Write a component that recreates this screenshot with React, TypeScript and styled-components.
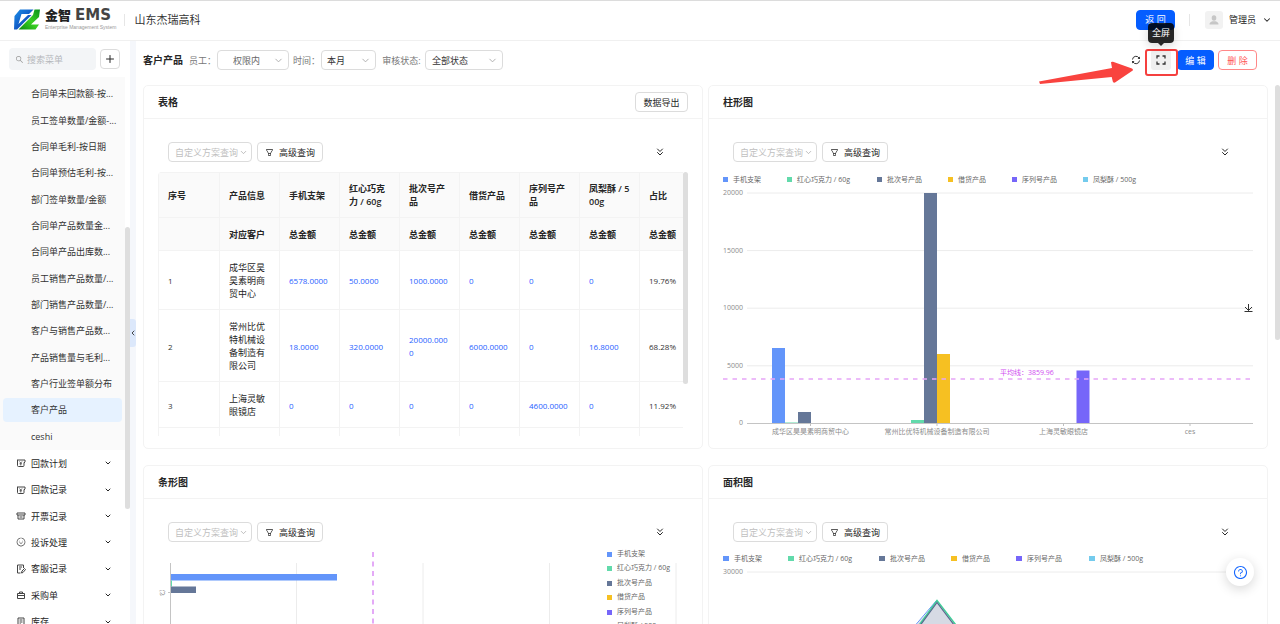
import React from "react";
import styled, { createGlobalStyle, css } from "styled-components";
import {
  AiOutlineFilter,
  AiOutlineSearch,
  AiOutlineSmile,
  AiOutlineQuestionCircle,
} from "react-icons/ai";
import { ChevronDown, ChevronLeft, ChevronsDown, Plus } from "lucide-react";

const FONT = '"Open Sans", "Noto Sans CJK SC", sans-serif';

const GlobalStyle = createGlobalStyle`
  *, *::before, *::after { box-sizing: border-box; }
  body {
    margin: 0;
    font-family: ${FONT};
    font-size: 9px;
    line-height: 13px;
    color: #262626;
    background: #fff;
  }
  button, select, input { font: inherit; color: inherit; }
  svg { display: block; flex: none; }
`;

const Page = styled.div`
  display: flex;
  flex-direction: column;
  height: 100vh;
  overflow: hidden;
`;

/* ---------- top bar ---------- */

const TopBar = styled.header`
  display: flex;
  align-items: center;
  flex: none;
  height: 41px;
  padding: 0 8px 2px 13px;
  border-top: 1px solid #dcdcdc;
  border-bottom: 1px solid #f0f0f0;
`;

const Brand = styled.div`
  display: flex;
  align-items: center;
  gap: 5px;
`;

const BrandText = styled.div`
  display: flex;
  flex-direction: column;
`;

const BrandName = styled.div`
  display: flex;
  align-items: center;
  gap: 4px;
  height: 14px;
  font-size: 13px;
  font-weight: 900;
  color: #222;
`;

const BrandLatin = styled.span`
  font-family: "DejaVu Sans", sans-serif;
  font-size: 15px;
  font-weight: 700;
  color: #444;
`;

const BrandSub = styled.span`
  font-family: "Liberation Sans", sans-serif;
  font-size: 5px;
  line-height: 8px;
  color: #999;
`;

const Divider = styled.span<{ $gapLeft: number; $gapRight: number }>`
  width: 1px;
  height: 12px;
  background: #e6e6e6;
  margin-left: ${(p) => p.$gapLeft}px;
  margin-right: ${(p) => p.$gapRight}px;
`;

const Company = styled.span`
  font-size: 11px;
  line-height: 16px;
  color: #333;
`;

const Spacer = styled.div`
  flex: 1;
`;

const Button = styled.button<{ $kind?: "primary" | "danger"; $width: number }>`
  display: inline-flex;
  align-items: center;
  justify-content: center;
  gap: 5px;
  flex: none;
  width: ${(p) => p.$width}px;
  height: 20px;
  padding: 0;
  border: 1px solid #dcdcdc;
  border-radius: 4px;
  background: #fff;
  line-height: 13px;
  white-space: nowrap;
  ${(p) =>
    p.$kind === "primary" &&
    css`
      border-color: #055dff;
      background: #055dff;
      color: #fff;
    `}
  ${(p) =>
    p.$kind === "danger" &&
    css`
      border-color: #f88;
      color: #f55;
    `}
`;

const Avatar = styled.span`
  display: flex;
  align-items: center;
  justify-content: center;
  width: 18px;
  height: 18px;
  margin-right: 6px;
  border-radius: 3px;
  background: #f2f2f2;
`;

const UserName = styled.span`
  margin-right: 6px;
  color: #222;
`;

/* ---------- side menu ---------- */

const Body = styled.div`
  display: flex;
  flex: 1;
  min-height: 0;
`;

const Side = styled.aside`
  display: flex;
  flex-direction: column;
  flex: none;
  width: 130px;
  overflow: hidden;
`;

const SearchRow = styled.div`
  display: flex;
  align-items: center;
  gap: 4px;
  padding: 7px 10px 7px 9px;
`;

const SearchBox = styled.label`
  display: flex;
  align-items: center;
  flex: 1;
  min-width: 0;
  gap: 3px;
  height: 22px;
  padding: 0 6px;
  border-radius: 4px;
  background: #f3f5f7;
  color: #999;
`;

const SearchInput = styled.input`
  flex: 1;
  width: 100%;
  min-width: 0;
  padding: 0;
  border: 0;
  outline: 0;
  background: transparent;
  &::placeholder {
    color: #b5b8bc;
    opacity: 1;
  }
`;

const MenuScroll = styled.div`
  display: flex;
  flex: 1;
  min-height: 0;
`;

const MenuColumn = styled.nav`
  flex: 1;
  min-width: 0;
  overflow: hidden;
`;

const SubMenu = styled.div`
  display: grid;
  grid-auto-rows: 1fr;
  align-items: center;
  min-height: 373px;
  padding: 4px 3px 0 3px;
  background: #fafafa;
`;

const SubItem = styled.a<{ $active?: boolean }>`
  display: block;
  height: 24px;
  padding-left: 28px;
  border-radius: 4px;
  line-height: 24px;
  color: #333;
  text-decoration: none;
  white-space: nowrap;
  background: ${(p) => (p.$active ? "#e6f2ff" : "transparent")};
`;

const MainMenu = styled.div`
  display: grid;
  grid-auto-rows: 1fr;
  align-items: center;
  min-height: 185px;
`;

const MainItem = styled.button`
  display: flex;
  align-items: center;
  gap: 5px;
  height: 24px;
  padding: 0 13px 0 16px;
  border: 0;
  background: transparent;
  text-align: left;
`;

const MainLabel = styled.span`
  flex: 1;
`;

const Rail = styled.div<{ $offset: number }>`
  flex: none;
  width: 5px;
  padding-top: ${(p) => p.$offset}px;
`;

const Thumb = styled.div<{ $length: number }>`
  flex: none;
  width: 5px;
  height: ${(p) => p.$length}px;
  border-radius: 3px;
  background: #dedede;
`;

const Gutter = styled.div`
  display: flex;
  align-items: center;
  flex: none;
  width: 6px;
  background: #f5f7fb;
`;

const Collapse = styled.button`
  display: flex;
  align-items: center;
  justify-content: center;
  width: 6px;
  height: 28px;
  padding: 0;
  border: 0;
  border-radius: 0 3px 3px 0;
  background: #dce8fb;
`;

/* ---------- content ---------- */

const Content = styled.main`
  display: flex;
  flex-direction: column;
  flex: 1;
  min-width: 0;
`;

const Toolbar = styled.div`
  display: flex;
  align-items: center;
  flex: none;
  height: 38px;
  margin-bottom: 6px;
  padding: 0 23px 0 7px;
`;

const ToolbarTitle = styled.h1`
  margin: 0 6px 0 0;
  font-size: 10px;
  line-height: 14px;
  font-weight: 700;
`;

const Field = styled.label`
  display: flex;
  align-items: center;
  margin-right: 4px;
  color: #777;
  white-space: nowrap;
`;

const FieldLabel = styled.span<{ $width: number }>`
  width: ${(p) => p.$width}px;
`;

const SelectBox = styled.span<{ $width: number }>`
  position: relative;
  display: block;
  flex: none;
  width: ${(p) => p.$width}px;
  height: 20px;
`;

const Select = styled.select<{ $pad: number; $color: string }>`
  appearance: none;
  width: 100%;
  height: 100%;
  padding: 0 0 0 ${(p) => p.$pad}px;
  border: 1px solid #dcdcdc;
  border-radius: 4px;
  background: #fff;
  color: ${(p) => p.$color};
`;

const SelectArrow = styled.span<{ $right: number }>`
  position: absolute;
  top: 0;
  bottom: 0;
  right: ${(p) => p.$right}px;
  display: flex;
  align-items: center;
  pointer-events: none;
  color: #aaa;
`;

const IconButton = styled.button<{ $filled?: boolean; $size: number }>`
  display: flex;
  align-items: center;
  justify-content: center;
  width: ${(p) => p.$size}px;
  height: ${(p) => p.$size}px;
  padding: 0;
  border: 0;
  border-radius: 3px;
  background: ${(p) => (p.$filled ? "#f0f0f0" : "transparent")};
`;

const ExpandWrap = styled.div`
  position: relative;
  z-index: 2;
  margin: 0 6px 0 10px;
`;

const Highlight = styled.span`
  position: absolute;
  left: -6px;
  top: -1px;
  width: 33px;
  height: 27px;
  border: 2px solid #f5403f;
  border-radius: 3px;
  pointer-events: none;
`;

const Pointer = styled.svg`
  position: absolute;
  left: -113px;
  top: 10px;
  pointer-events: none;
`;

const Tooltip = styled.span`
  position: absolute;
  left: -3px;
  top: -27px;
  width: 26px;
  height: 20px;
  border-radius: 4px;
  background: rgba(0, 0, 0, 0.85);
  color: #fff;
  line-height: 20px;
  text-align: center;
  box-shadow: 0 3px 10px rgba(0, 0, 0, 0.15);
  &::after {
    content: "";
    position: absolute;
    left: 10px;
    top: 20px;
    border: 3px solid transparent;
    border-top-color: #262626;
    border-bottom: 0;
  }
`;

const Scroll = styled.div`
  display: flex;
  flex: 1;
  min-height: 0;
`;

const Board = styled.div`
  display: grid;
  grid-template-columns: minmax(0, 1fr) minmax(0, 1fr);
  grid-auto-rows: 364px;
  gap: 16px 5px;
  flex: 1;
  min-width: 0;
  padding: 0 7px;
  overflow: hidden;
`;

const Card = styled.section`
  border: 1px solid #f3f3f3;
  border-radius: 5px;
  background: #fff;
`;

const CardHead = styled.div`
  display: flex;
  align-items: center;
  justify-content: space-between;
  height: 33px;
  padding: 0 14px;
  border-bottom: 1px solid #f3f3f3;
`;

const CardTitle = styled.h2`
  margin: 0;
  font-size: 10px;
  line-height: 14px;
  font-weight: 700;
`;

const CardBody = styled.div`
  padding: 23px 14px 14px;
`;

const Filters = styled.div`
  display: flex;
  align-items: center;
  gap: 5px;
  margin-bottom: 10px;
  padding: 0 22px 0 10px;
`;

/* ---------- table ---------- */

const TableArea = styled.div`
  display: flex;
  align-items: flex-start;
`;

const TableView = styled.div`
  flex: 1;
  min-width: 0;
  height: 264px;
  overflow: hidden;
  border-radius: 4px 0 0 0;
`;

const Table = styled.table`
  width: 100%;
  min-width: 526px;
  table-layout: fixed;
  border-collapse: separate;
  border-spacing: 0;
  border-left: 1px solid #f3f3f3;
`;

const cell = css`
  padding: 10px 9px 9px;
  border-right: 1px solid #f3f3f3;
  border-bottom: 1px solid #f3f3f3;
  text-align: left;
  vertical-align: middle;
  word-break: break-all;
  &:last-child {
    padding-right: 0;
  }
`;

const Th = styled.th`
  ${cell}
  border-top: ${(p) => (p.scope === "colgroup" ? "1px solid #f3f3f3" : "0")};
  padding-top: ${(p) => (p.scope === "colgroup" ? "9px" : "10px")};
  background: #fafafa;
  font-weight: 600;
`;

const Td = styled.td`
  ${cell}
`;

const Figure = styled.span<{ $link?: boolean }>`
  font-size: 8px;
  color: ${(p) => (p.$link ? "#1f62ff" : "#333")};
`;

/* ---------- charts ---------- */

const Chart = styled.svg`
  width: 100%;
  font-family: ${FONT};
  font-size: 7px;
  overflow: visible;
`;

const Help = styled.button`
  position: fixed;
  right: 26px;
  bottom: 38px;
  display: flex;
  align-items: center;
  justify-content: center;
  width: 28px;
  height: 28px;
  padding: 0;
  border: 0;
  border-radius: 50%;
  background: #fff;
  color: #1668ff;
  box-shadow: 0 3px 12px rgba(0, 0, 0, 0.16);
`;

const Logo = () => (
  <svg width="27" height="21" viewBox="0 0 27 21" aria-hidden="true">
    <defs>
      <linearGradient id="lb" x1="0" y1="0" x2="1" y2="1">
        <stop offset="0" stopColor="#1b8fe8" />
        <stop offset="1" stopColor="#0a2fa8" />
      </linearGradient>
      <linearGradient id="lg" x1="1" y1="0" x2="0" y2="1">
        <stop offset="0" stopColor="#0a8f1e" />
        <stop offset="0.5" stopColor="#39d021" />
        <stop offset="1" stopColor="#0b8a12" />
      </linearGradient>
    </defs>
    <path d="M7 0.500H20.500L16 5H8.500L5.500 15L15 6H18.500L4 20.500H1L1.500 7Z" fill="url(#lb)" />
    <path d="M21.500 0.500H27L26 8L18 15.500H26L22.500 20.500H5.500L20 6Z" fill="url(#lg)" />
  </svg>
);

const svgProps = {
  width: 10,
  height: 10,
  viewBox: "0 0 20 20",
  fill: "none",
  stroke: "#444",
  strokeWidth: 2,
  "aria-hidden": true,
} as const;

const menuIcons: Record<string, React.ReactNode> = {
  money: (
    <svg {...svgProps}>
      <path d="M2 4H18V8L16 10M3 4V15Q3 17 5 17H14Q16 17 16 15V9" />
      <path d="M7 7L9.500 10L12 7M9.500 10V15M7 11.500H12" strokeWidth="1.600" />
    </svg>
  ),
  ticket: (
    <svg {...svgProps}>
      <path d="M2 4H18V8H2ZM4 8V16H16V8M7 12H13" />
    </svg>
  ),
  smile: <AiOutlineSmile size={10} color="#444" />,
  note: (
    <svg {...svgProps}>
      <path d="M9 18H3V2H15V8M6 6H12M6 10H10M11 18L12 14L17 9L19 11L14 17Z" />
    </svg>
  ),
  bag: (
    <svg {...svgProps}>
      <path d="M3 7H17V17H3ZM7 7V4H13V7M3 11H17" />
    </svg>
  ),
  stock: (
    <svg {...svgProps}>
      <path d="M4 2H16V18H4ZM7 6H13M7 10H13M7 14H10" />
    </svg>
  ),
};

const subItems = [
  "合同单未回款额-按...",
  "员工签单数量/金额-...",
  "合同单毛利-按日期",
  "合同单预估毛利-按...",
  "部门签单数量/金额",
  "合同单产品数量金...",
  "合同单产品出库数...",
  "员工销售产品数量/...",
  "部门销售产品数量/...",
  "客户与销售产品数...",
  "产品销售量与毛利...",
  "客户行业签单额分布",
  "客户产品",
  "ceshi",
];

const mainItems = [
  { label: "回款计划", icon: "money" },
  { label: "回款记录", icon: "money" },
  { label: "开票记录", icon: "ticket" },
  { label: "投诉处理", icon: "smile" },
  { label: "客服记录", icon: "note" },
  { label: "采购单", icon: "bag" },
  { label: "库存", icon: "stock" },
];

const products = [
  "手机支架",
  "红心巧克力 / 60g",
  "批次号产品",
  "借货产品",
  "序列号产品",
  "凤梨酥 / 500g",
];
const colors = ["#6395fa", "#62daab", "#657798", "#f6c022", "#7666f9", "#74cbed"];

const rows = [
  { name: "成华区昊昊素明商贸中心", values: ["6578.0000", "50.0000", "1000.0000", "0", "0", "0"], share: "19.76%" },
  { name: "常州比优特机械设备制造有限公司", values: ["18.0000", "320.0000", "20000.0000", "6000.0000", "0", "16.8000"], share: "68.28%" },
  { name: "上海灵敏眼镜店", values: ["0", "0", "0", "0", "4600.0000", "0"], share: "11.92%" },
];

function Dropdown({ value, width, pad = 7, right = 5, color = "#333", label }: {
  value: string; width: number; pad?: number; right?: number; color?: string; label?: string;
}) {
  return (
    <SelectBox $width={width}>
      <Select $pad={pad} $color={color} aria-label={label} defaultValue={value}>
        <option>{value}</option>
      </Select>
      <SelectArrow $right={right}>
        <ChevronDown size={label ? 9 : 11} strokeWidth={2} />
      </SelectArrow>
    </SelectBox>
  );
}

function Panel({ title, action, children }: { title: string; action?: React.ReactNode; children: React.ReactNode }) {
  return (
    <Card>
      <CardHead>
        <CardTitle>{title}</CardTitle>
        {action}
      </CardHead>
      <CardBody>
        <Filters>
          <Dropdown value="自定义方案查询" width={84} pad={6} right={4} color="#bfbfbf" label="自定义方案查询" />
          <Button $width={66}>
            <AiOutlineFilter size={9} />
            高级查询
          </Button>
          <Spacer />
          <IconButton $size={12} aria-label="展开">
            <ChevronsDown size={12} strokeWidth={2} />
          </IconButton>
        </Filters>
        {children}
      </CardBody>
    </Card>
  );
}

function DataTable() {
  return (
    <TableArea>
      <TableView>
        <Table>
          <colgroup>
            {[61, 60, 60, 60, 60, 60, 60, 60, 45].map((w, i) => (
              <col key={i} width={w} />
            ))}
          </colgroup>
          <thead>
            <tr>
              {["序号", "产品信息", ...products, "占比"].map((h) => (
                <Th key={h} scope="colgroup">{h}</Th>
              ))}
            </tr>
            <tr>
              <Th scope="col" />
              <Th scope="col">对应客户</Th>
              {[...products, "占比"].map((h) => (
                <Th key={h} scope="col">总金额</Th>
              ))}
            </tr>
          </thead>
          <tbody>
            {rows.map((r, i) => (
              <tr key={r.name}>
                <Td><Figure>{i + 1}</Figure></Td>
                <Td>{r.name}</Td>
                {r.values.map((v, j) => (
                  <Td key={j}><Figure $link>{v}</Figure></Td>
                ))}
                <Td><Figure>{r.share}</Figure></Td>
              </tr>
            ))}
            <tr>
              {["序号", "产品信息", ...products, "占比"].map((h) => (
                <Td key={h} />
              ))}
            </tr>
          </tbody>
        </Table>
      </TableView>
      <Thumb $length={212} />
    </TableArea>
  );
}

function ColumnChart() {
  const legendX = [0, 64, 154, 225, 289, 360];
  const bars = [
    [49, 176, 0], [62, 250.5, 1], [75, 240, 2],
    [188, 248, 1], [201, 21, 2], [214, 182, 3],
    [353.5, 198.500, 4], [493, 251, 5],
  ];
  const cats: [string, number][] = [
    ["成华区昊昊素明商贸中心", 87.500],
    ["常州比优特机械设备制造有限公司", 214],
    ["上海灵敏眼镜店", 340.500],
    ["ces", 467],
  ];
  return (
    <Chart viewBox="0 0 530 264">
      {products.map((p, i) => (
        <g key={p}>
          <rect x={legendX[i]} y="5" width="5" height="5" fill={colors[i]} />
          <text x={legendX[i] + 10} y="10" fill="#666">{p}</text>
        </g>
      ))}
      {["20000", "15000", "10000", "5000"].map((t, i) => (
        <g key={t}>
          <line x1="24" x2="530" y1={21 + i * 57.6} y2={21 + i * 57.6} stroke="#ececec" />
          <text x="20" y={23 + i * 57.6} textAnchor="end" fill="#8c8c8c">{t}</text>
        </g>
      ))}
      <text x="20" y="253" textAnchor="end" fill="#8c8c8c">0</text>
      {bars.map(([x, y, c]) => (
        <rect key={x} x={x} y={y} width="13" height={251.5 - y} fill={colors[c]} />
      ))}
      <line x1="24" x2="530" y1="251.5" y2="251.5" stroke="#c4c4c4" />
      {cats.map(([name, x]) => (
        <g key={name}>
          <line x1={x} x2={x} y1="251.5" y2="254" stroke="#bfbfbf" />
          <text x={x} y="262" textAnchor="middle" fill="#8c8c8c">{name}</text>
        </g>
      ))}
      <line x1="0" x2="530" y1="207" y2="207" stroke="#e6a5f8" strokeWidth="1.500" strokeDasharray="4.500 5" />
      <text x="277" y="203" fill="#d04df0">平均线：3859.96</text>
      <path d="M525.500 132V138.500M522 135L525.500 138.500L529 135M521.500 139.500H529.500" stroke="#333" fill="none" />
    </Chart>
  );
}

function BarChart() {
  return (
    <Chart viewBox="0 0 530 264">
      {[138.500, 265, 391.500, 518].map((x) => (
        <line key={x} x1={x} x2={x} y1="11" y2="264" stroke="#ececec" />
      ))}
      <rect x="13" y="22" width="166" height="6.500" fill={colors[0]} />
      <rect x="13" y="28.500" width="1" height="6" fill={colors[1]} />
      <rect x="13" y="34.500" width="25" height="6.500" fill={colors[2]} />
      <line x1="12.500" x2="12.500" y1="11" y2="264" stroke="#c4c4c4" />
      <line x1="10" x2="12.500" y1="40.500" y2="40.500" stroke="#c4c4c4" />
      <text x="4" y="43" fill="#8c8c8c" textAnchor="middle" transform="rotate(-45 4 40.500)">心</text>
      <line x1="215" x2="215" y1="0" y2="264" stroke="#dc8ef5" strokeWidth="1.500" strokeDasharray="5 4.500" />
      {products.map((p, i) => (
        <g key={p}>
          <rect x="449" y={Math.round(i * 14.4)} width="5" height="5" fill={colors[i]} />
          <text x="459" y={Math.round(4 + i * 14.4)} fill="#666">{p}</text>
        </g>
      ))}
    </Chart>
  );
}

function AreaChart() {
  const legendX = [0, 65, 156, 228, 293, 366];
  return (
    <Chart viewBox="0 0 530 264">
      {products.map((p, i) => (
        <g key={p}>
          <rect x={legendX[i]} y="4" width="6" height="5" fill={colors[i]} />
          <text x={legendX[i] + 11} y="9" fill="#666">{p}</text>
        </g>
      ))}
      <text x="20" y="22" textAnchor="end" fill="#8c8c8c">30000</text>
      <line x1="24" x2="530" y1="20" y2="20" stroke="#ececec" />
      <path d="M178 90L214 50L244 90Z" fill="#d6dae4" />
      <path d="M178 90L213.500 48.500" stroke={colors[0]} fill="none" />
      <path d="M184 90L214 48.500L246 90" stroke="#3fcf98" strokeWidth="1.500" fill="none" />
      <path d="M185 90L214 50.500L244 90" stroke="#566a8d" strokeWidth="1.200" fill="none" />
    </Chart>
  );
}

export default function App() {
  return (
    <Page>
      <GlobalStyle />
      <TopBar>
        <Brand>
          <Logo />
          <BrandText>
            <BrandName>
              金智 <BrandLatin>EMS</BrandLatin>
            </BrandName>
            <BrandSub>Enterprise Management System</BrandSub>
          </BrandText>
        </Brand>
        <Divider $gapLeft={8} $gapRight={9} />
        <Company>山东杰瑞高科</Company>
        <Spacer />
        <Button $kind="primary" $width={39}>返 回</Button>
        <Divider $gapLeft={14} $gapRight={15} />
        <Avatar>
          <svg width="10" height="10" viewBox="0 0 10 10" fill="#c6c6c6" aria-hidden="true">
            <ellipse cx="5" cy="3" rx="2.300" ry="2.800" />
            <path d="M0.500 9.500Q0.500 7 3.500 6.300H6.500Q9.500 7 9.500 9.500Z" />
          </svg>
        </Avatar>
        <UserName>管理员</UserName>
        <ChevronDown size={10} strokeWidth={2.5} />
      </TopBar>
      <Body>
        <Side>
          <SearchRow>
            <SearchBox>
              <AiOutlineSearch size={9} />
              <SearchInput placeholder="搜索菜单" aria-label="搜索菜单" />
            </SearchBox>
            <Button $width={20} aria-label="新增">
              <Plus size={12} strokeWidth={2} />
            </Button>
          </SearchRow>
          <MenuScroll>
            <MenuColumn>
              <SubMenu>
                {subItems.map((t) => (
                  <SubItem key={t} href="#" $active={t === "客户产品"}>{t}</SubItem>
                ))}
              </SubMenu>
              <MainMenu>
                {mainItems.map((m) => (
                  <MainItem key={m.label}>
                    {menuIcons[m.icon]}
                    <MainLabel>{m.label}</MainLabel>
                    <ChevronDown size={8} strokeWidth={3} />
                  </MainItem>
                ))}
              </MainMenu>
            </MenuColumn>
            <Rail $offset={150}>
              <Thumb $length={282} />
            </Rail>
          </MenuScroll>
        </Side>
        <Gutter>
          <Collapse aria-label="收起菜单">
            <ChevronLeft size={8} strokeWidth={2.5} />
          </Collapse>
        </Gutter>
        <Content>
          <Toolbar>
            <ToolbarTitle>客户产品</ToolbarTitle>
            <Field>
              <FieldLabel $width={28}>员工：</FieldLabel>
              <Dropdown value="权限内" width={72} pad={15} color="#666" />
            </Field>
            <Field>
              <FieldLabel $width={28}>时间：</FieldLabel>
              <Dropdown value="本月" width={55} pad={5} />
            </Field>
            <Field>
              <FieldLabel $width={45}>&nbsp;审核状态:</FieldLabel>
              <Dropdown value="全部状态" width={78} pad={6} />
            </Field>
            <Spacer />
            <IconButton $size={10} aria-label="刷新">
              <svg width="10" height="10" viewBox="0 0 20 20" fill="none" stroke="#333" strokeWidth="2" aria-hidden="true">
                <path d="M3 9A7 7 0 0 1 16 6M17 11A7 7 0 0 1 4 14" />
                <path d="M18 3V8H13ZM2 17V12H7Z" fill="#333" stroke="none" />
              </svg>
            </IconButton>
            <ExpandWrap>
              <IconButton $size={20} $filled aria-label="全屏">
                <svg width="10" height="10" viewBox="0 0 10 10" fill="none" stroke="#333" strokeWidth="1.300" aria-hidden="true">
                  <path d="M1 3.500V1H3.500M6.500 1H9V3.500M9 6.500V9H6.500M3.500 9H1V6.500" />
                </svg>
              </IconButton>
              <Highlight />
              <Tooltip role="tooltip">全屏</Tooltip>
              <Pointer width="96" height="26" viewBox="0 0 96 26" aria-hidden="true">
                <path d="M1 21.500L74 8L73 2.500Q73 1.500 75 1.700L94 8.500Q96 10 94 11L77 22.500Q75 23 74.800 21.500L73.700 17L2 24Z" fill="#f9433f" />
              </Pointer>
            </ExpandWrap>
            <Button $kind="primary" $width={37}>编 辑</Button>
            <Divider $gapLeft={3} $gapRight={0} style={{ background: "transparent" }} />
            <Button $kind="danger" $width={39}>删 除</Button>
          </Toolbar>
          <Scroll>
            <Board>
              <Panel title="表格" action={<Button $width={53}>数据导出</Button>}>
                <DataTable />
              </Panel>
              <Panel title="柱形图"><ColumnChart /></Panel>
              <Panel title="条形图"><BarChart /></Panel>
              <Panel title="面积图"><AreaChart /></Panel>
            </Board>
            <Rail $offset={0}>
              <Thumb $length={255} />
            </Rail>
          </Scroll>
        </Content>
      </Body>
      <Help aria-label="帮助">
        <AiOutlineQuestionCircle size={15} />
      </Help>
    </Page>
  );
}
